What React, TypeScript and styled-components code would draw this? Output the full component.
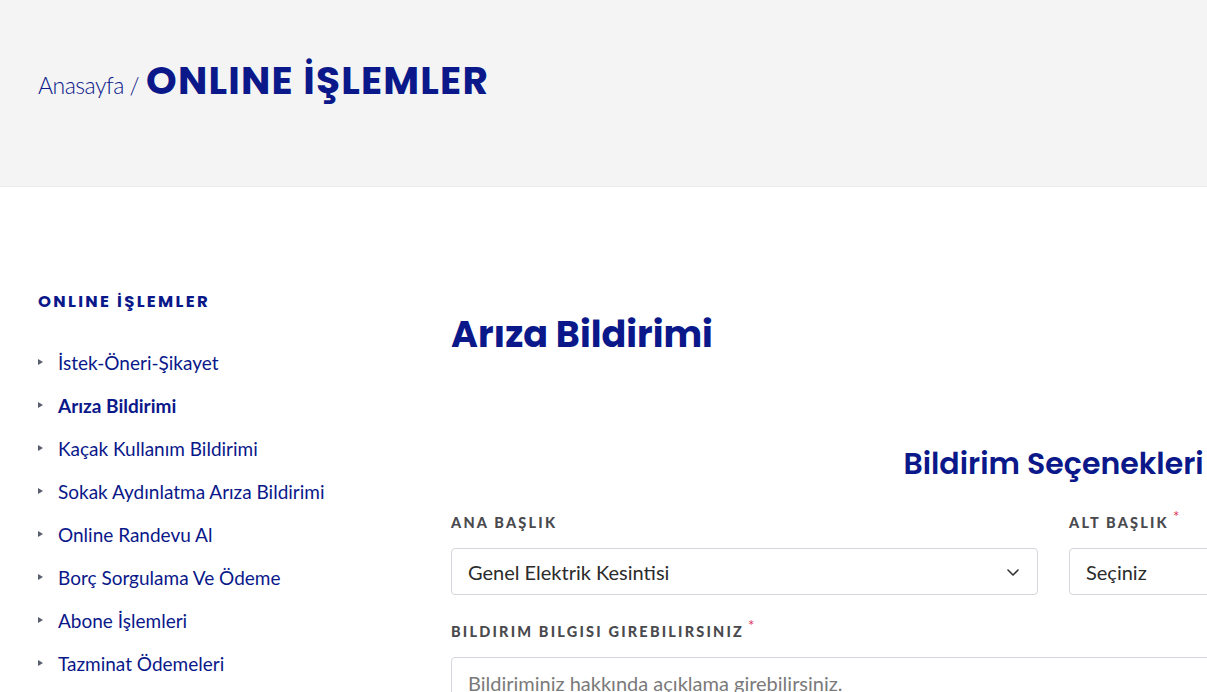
import React from 'react'
import styled, { createGlobalStyle } from 'styled-components'

const NAVY = '#0a188a'

const GlobalStyle = createGlobalStyle`
  html, body {
    margin: 0;
    padding: 0;
    background: #ffffff;
    overflow: hidden;
  }
  body {
    font-family: Lato, 'Liberation Sans', sans-serif;
  }
  * {
    box-sizing: border-box;
  }
`

const Page = styled.div`
  width: 1207px;
  overflow: hidden;
`

const HeaderBand = styled.header`
  height: 187px;
  background-color: #f4f4f4;
  border-bottom: 1px solid #ebebeb;
  padding: 51px 0 0 38px;
`

const Breadcrumb = styled.div`
  display: flex;
  align-items: baseline;
  gap: 7px;
  color: ${NAVY};
`

const Crumb = styled.span`
  font-family: Lato, sans-serif;
  font-weight: 300;
  font-size: 23px;
  letter-spacing: -0.5px;
`

const PageTitle = styled.h1`
  margin: 0;
  font-family: Poppins, Inter, sans-serif;
  font-weight: 700;
  font-size: 39px;
  letter-spacing: 1.2px;
`

const Content = styled.div`
  display: flex;
  padding-top: 102px;
`

const Sidebar = styled.aside`
  width: 451px;
  flex-shrink: 0;
  padding-left: 38px;
`

const SideHeading = styled.h3`
  margin: 0 0 35px;
  font-family: Poppins, Inter, sans-serif;
  font-weight: 700;
  font-size: 16.5px;
  letter-spacing: 2.3px;
  color: ${NAVY};
`

const NavList = styled.ul`
  list-style: none;
  margin: 0;
  padding: 0;
  display: flex;
  flex-direction: column;
  gap: 17px;
`

const NavItem = styled.li<{ $active?: boolean }>`
  display: flex;
  align-items: center;
  gap: 15px;
  height: 26px;
  font-size: 19px;
  font-weight: ${({ $active }) => ($active ? 700 : 400)};
  color: ${NAVY};
  &::before {
    content: '';
    width: 0;
    height: 0;
    border-top: 3.5px solid transparent;
    border-bottom: 3.5px solid transparent;
    border-left: 5px solid #5a5f70;
  }
`

const Main = styled.main`
  width: 1205px;
  flex-shrink: 0;
`

const MainTitle = styled.h2`
  margin: 24px 0 0;
  font-family: Poppins, Inter, sans-serif;
  font-weight: 700;
  font-size: 36.5px;
  line-height: 44px;
  color: ${NAVY};
`

const SectionTitle = styled.h3`
  margin: 89px 0 0;
  text-align: center;
  font-family: Poppins, Inter, sans-serif;
  font-weight: 600;
  font-size: 30px;
  line-height: 36px;
  color: ${NAVY};
`

const FieldRow = styled.div`
  display: grid;
  grid-template-columns: 1fr 1fr;
  gap: 31px;
  margin-top: 32px;
`

const Field = styled.div`
  display: flex;
  flex-direction: column;
`

const Label = styled.label`
  display: block;
  height: 20px;
  margin-bottom: 14px;
  font-size: 14.5px;
  font-weight: 900;
  letter-spacing: 2.2px;
  color: #4a4a4e;
  text-transform: uppercase;
`

const Required = styled.sup`
  margin-left: 4px;
  font-size: 15px;
  font-weight: 400;
  color: #e0305a;
  vertical-align: 6px;
  line-height: 0;
`

const SelectBox = styled.div`
  height: 47px;
  display: flex;
  align-items: center;
  justify-content: space-between;
  padding: 0 16px;
  border: 1px solid #d4d6dc;
  border-radius: 4px;
  font-size: 20px;
  color: #2b2b2b;
  background: #fff;
`

const Chevron = styled.svg`
  width: 16px;
  height: 16px;
  color: #333;
`

const TextBlock = styled.div`
  margin-top: 28px;
`

const TextArea = styled.div`
  height: 120px;
  padding: 13px 16px;
  border: 1px solid #d4d6dc;
  border-radius: 4px;
  font-size: 20px;
  color: #7a7a7a;
`

const navItems = [
  'İstek-Öneri-Şikayet',
  'Arıza Bildirimi',
  'Kaçak Kullanım Bildirimi',
  'Sokak Aydınlatma Arıza Bildirimi',
  'Online Randevu Al',
  'Borç Sorgulama Ve Ödeme',
  'Abone İşlemleri',
  'Tazminat Ödemeleri',
]

export default function App() {
  return (
    <Page>
      <GlobalStyle />
      <HeaderBand>
        <Breadcrumb>
          <Crumb>Anasayfa /</Crumb>
          <PageTitle>ONLINE İŞLEMLER</PageTitle>
        </Breadcrumb>
      </HeaderBand>
      <Content>
        <Sidebar>
          <SideHeading>ONLINE İŞLEMLER</SideHeading>
          <NavList>
            {navItems.map((item) => (
              <NavItem key={item} $active={item === 'Arıza Bildirimi'}>
                {item}
              </NavItem>
            ))}
          </NavList>
        </Sidebar>
        <Main>
          <MainTitle>Arıza Bildirimi</MainTitle>
          <SectionTitle>Bildirim Seçenekleri</SectionTitle>
          <FieldRow>
            <Field>
              <Label>Ana Başlık</Label>
              <SelectBox>
                <span>Genel Elektrik Kesintisi</span>
                <Chevron viewBox="0 0 16 16" fill="none" stroke="currentColor" strokeWidth="1.6" strokeLinecap="round" strokeLinejoin="round">
                  <path d="M3 6l5 5 5-5" />
                </Chevron>
              </SelectBox>
            </Field>
            <Field>
              <Label>
                Alt Başlık<Required>*</Required>
              </Label>
              <SelectBox>
                <span>Seçiniz</span>
                <Chevron viewBox="0 0 16 16" fill="none" stroke="currentColor" strokeWidth="1.6" strokeLinecap="round" strokeLinejoin="round">
                  <path d="M3 6l5 5 5-5" />
                </Chevron>
              </SelectBox>
            </Field>
          </FieldRow>
          <TextBlock>
            <Label>
              BILDIRIM BILGISI GIREBILIRSINIZ<Required>*</Required>
            </Label>
            <TextArea>Bildiriminiz hakkında açıklama girebilirsiniz.</TextArea>
          </TextBlock>
        </Main>
      </Content>
    </Page>
  )
}
